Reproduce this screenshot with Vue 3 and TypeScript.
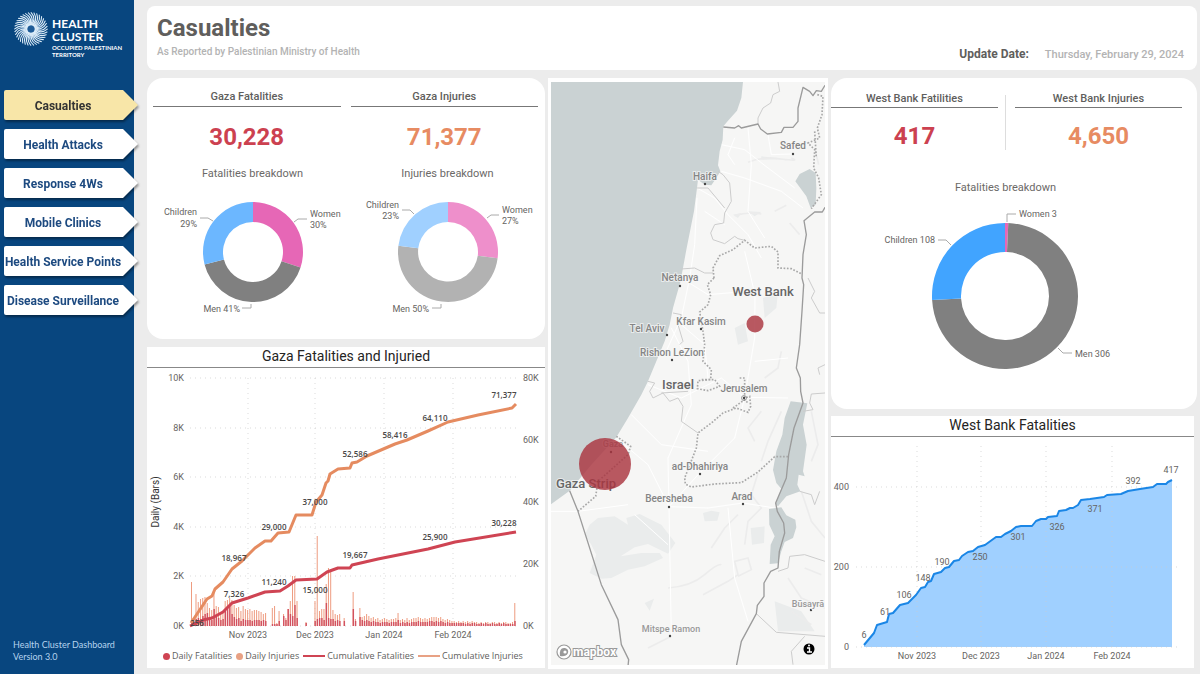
<script setup lang="ts">
interface Slice { value: number; color: string }
interface Label { x: number; y: number; text: string }
interface Place extends Label { dot?: [number, number]; size?: 'minor' | 'region' }

const pages = ['Casualties', 'Health Attacks', 'Response 4Ws', 'Mobile Clinics', 'Health Service Points', 'Disease Surveillance']
const current = 'Casualties'

function ring(cx: number, cy: number, outer: number, inner: number, slices: Slice[]) {
  const total = slices.reduce((sum, s) => sum + s.value, 0)
  const at = (r: number, share: number) => {
    const a = share * 2 * Math.PI
    return `${(cx + r * Math.sin(a)).toFixed(2)} ${(cy - r * Math.cos(a)).toFixed(2)}`
  }
  let from = 0
  return slices.map((s) => {
    const to = from + s.value / total
    const big = to - from > 0.5 ? 1 : 0
    const d = `M${at(outer, from)}A${outer} ${outer} 0 ${big} 1 ${at(outer, to)}L${at(inner, to)}A${inner} ${inner} 0 ${big} 0 ${at(inner, from)}Z`
    from = to
    return { d, color: s.color }
  })
}

const gazaFatalities = ring(98, 66, 50, 30, [
  { value: 30, color: '#e667b6' },
  { value: 41, color: '#808080' },
  { value: 29, color: '#6cb7ff' },
])
const gazaInjuries = ring(98, 66, 50, 30, [
  { value: 27, color: '#ee8fcb' },
  { value: 50, color: '#b2b2b2' },
  { value: 23, color: '#a0d0ff' },
])
const westBank = ring(174, 98, 73, 44, [
  { value: 3, color: '#e667b6' },
  { value: 306, color: '#808080' },
  { value: 108, color: '#41a4ff' },
])

const dailyInjuries = [
  44, 8, 32, 24, 27, 28, 29, 23, 18, 16, 36, 20, 19, 14, 15, 25, 26, 28, 26, 21, 18, 19, 15, 20, 17, 16, 17, 15, 16, 16,
  15, 14, 12, 13, 0, 0, 18, 20, 3, 15, 0, 12, 8, 17, 25, 50, 50, 25, 0, 0, 0, 4, 0, 0, 0, 25, 90, 15, 17, 17,
  42, 58, 54, 16, 12, 11, 12, 0, 8, 0, 0, 0, 34, 7, 0, 18, 9, 10, 12, 10, 8, 9, 7, 8, 6, 7, 8, 7, 6, 7,
  7, 8, 13, 6, 7, 6, 8, 6, 7, 8, 8, 9, 8, 7, 8, 7, 8, 9, 9, 9, 8, 9, 7, 6, 7, 6, 5, 5, 4, 5,
  4, 5, 4, 5, 4, 5, 4, 4, 3, 4, 3, 4, 4, 3, 4, 4, 3, 4, 3, 4, 4, 3, 3, 4, 23,
]
const dailyFatalities = [
  6, 4, 7, 8, 7, 10, 12, 13, 9, 6, 17, 11, 8, 6, 7, 15, 20, 22, 12, 9, 7, 8, 5, 7, 6, 6, 6, 5, 6, 6,
  6, 5, 6, 5, 0, 0, 2, 2, 2, 5, 0, 10, 6, 17, 12, 10, 21, 8, 0, 0, 0, 3, 0, 0, 0, 5, 7, 8, 8, 6,
  23, 8, 7, 7, 5, 6, 5, 0, 5, 0, 0, 0, 17, 5, 0, 9, 6, 5, 6, 5, 4, 5, 4, 4, 3, 4, 4, 4, 3, 4,
  4, 4, 6, 3, 4, 3, 4, 3, 4, 4, 4, 5, 4, 4, 4, 4, 5, 5, 4, 5, 4, 5, 4, 3, 4, 3, 3, 3, 3, 3,
  3, 3, 2, 3, 2, 3, 3, 2, 2, 3, 2, 3, 2, 2, 3, 2, 2, 3, 2, 3, 2, 2, 2, 2, 5,
]
const barX = (i: number) => 191 + i * 2.245

const injuriesLine = '191,623 197,614 207,599 212,596 215,589 223,582 232,569 242,561 255,548 265,541 271,541 278,533 289,532 296,515 312,515 316,502 322,495 326,483 328,481 330,474 338,469 350,468 352,463 357,462 367,456 395,444 407,440 428,431 448,422 478,415 512,408 516,404'
const fatalitiesLine = '190,626 203,620 212,618 223,612 232,603 248,598 265,592 280,591 288,586 296,580 317,579 327,572 338,568 350,568 352,565 378,559 428,549 455,542 516,532'
const westBankLine = '864,645 874,633 877,625 887,622 889,614 893,613 900,605 908,603 916,595 921,588 925,587 928,582 931,581 934,574 941,572 945,568 949,567 954,561 959,560 962,556 968,552 973,551 978,547 985,545 996,537 1001,537 1005,534 1011,531 1016,527 1021,526 1032,526 1036,521 1041,519 1046,519 1048,517 1057,516 1059,511 1066,510 1070,508 1073,508 1078,505 1081,500 1090,499 1104,497 1107,495 1121,494 1128,491 1140,489 1153,487 1157,484 1166,484 1168,482 1172,480'

const gazaMonths: Label[] = [
  { x: 248, y: 638, text: 'Nov 2023' }, { x: 315, y: 638, text: 'Dec 2023' },
  { x: 384, y: 638, text: 'Jan 2024' }, { x: 453, y: 638, text: 'Feb 2024' },
]
const gazaLeft: Label[] = ['10K', '8K', '6K', '4K', '2K', '0K'].map((text, i) => ({ x: 184, y: Math.round(378 + i * 49.6), text }))
const gazaRight: Label[] = ['80K', '60K', '40K', '20K', '0K'].map((text, i) => ({ x: 523, y: 378 + i * 62, text }))
const gazaValues: Label[] = [
  { x: 504, y: 398, text: '71,377' }, { x: 435, y: 421, text: '64,110' }, { x: 395, y: 438, text: '58,416' },
  { x: 355, y: 457, text: '52,586' }, { x: 315, y: 505, text: '37,000' }, { x: 274, y: 530, text: '29,000' },
  { x: 234, y: 561, text: '18,967' }, { x: 234, y: 597, text: '7,326' }, { x: 274, y: 585, text: '11,240' },
  { x: 315, y: 593, text: '15,000' }, { x: 355, y: 558, text: '19,667' }, { x: 435, y: 540, text: '25,900' },
  { x: 504, y: 526, text: '30,228' }, { x: 197, y: 626, text: '256' },
]
const westMonths: Label[] = [
  { x: 917, y: 659, text: 'Nov 2023' }, { x: 981, y: 659, text: 'Dec 2023' },
  { x: 1046, y: 659, text: 'Jan 2024' }, { x: 1112, y: 659, text: 'Feb 2024' },
]
const westLevels: Label[] = [{ x: 849, y: 487, text: '400' }, { x: 849, y: 567, text: '200' }, { x: 849, y: 647, text: '0' }]
const westValues: Label[] = [
  { x: 864, y: 638, text: '6' }, { x: 885, y: 615, text: '61' }, { x: 904, y: 598, text: '106' },
  { x: 923, y: 581, text: '148' }, { x: 942, y: 565, text: '190' }, { x: 980, y: 560, text: '250' },
  { x: 1018, y: 540, text: '301' }, { x: 1057, y: 530, text: '326' }, { x: 1095, y: 512, text: '371' },
  { x: 1133, y: 484, text: '392' }, { x: 1171, y: 473, text: '417' },
]

const places: Place[] = [
  { x: 242, y: 67, text: 'Safed', dot: [242, 72] },
  { x: 154, y: 98, text: 'Haifa', dot: [154, 102] },
  { x: 129, y: 199, text: 'Netanya', dot: [129, 204] },
  { x: 150, y: 243, text: 'Kfar Kasim', dot: [150, 247] },
  { x: 96, y: 250, text: 'Tel Aviv', dot: [116, 253] },
  { x: 121, y: 274, text: 'Rishon LeZion', dot: [121, 278] },
  { x: 193, y: 310, text: 'Jerusalem', dot: [193, 316] },
  { x: 149, y: 388, text: 'ad-Dhahiriya', dot: [149, 392] },
  { x: 118, y: 420, text: 'Beersheba', dot: [118, 425] },
  { x: 191, y: 418, text: 'Arad', dot: [192, 422] },
  { x: 120, y: 550, text: 'Mitspe Ramon', dot: [119, 554], size: 'minor' },
  { x: 257, y: 525, text: 'Būsayrā', dot: [260, 528], size: 'minor' },
  { x: 62, y: 365, text: 'Gaza', dot: [60, 370], size: 'minor' },
  { x: 212, y: 214, text: 'West Bank', size: 'region' },
  { x: 127, y: 307, text: 'Israel', size: 'region' },
  { x: 35, y: 406, text: 'Gaza Strip', size: 'region' },
]

const blades = Array.from({ length: 36 }, (_, i) => i * 10)
</script>

<template>
  <div class="page">
    <aside class="sidebar">
      <div class="brand">
        <svg class="swirl" viewBox="-17 -17 34 34" aria-hidden="true">
          <circle r="10" fill="#4f86ba" fill-opacity="0.6" />
          <path v-for="a in blades" :key="a" :transform="`rotate(${a})`" d="M0-4C5-6 6-11 3-16" />
          <circle r="3.5" fill="#1f5c98" />
        </svg>
        <div class="brand-text">
          <strong>HEALTH<br>CLUSTER</strong>
          <small>OCCUPIED PALESTINIAN<br>TERRITORY</small>
        </div>
      </div>
      <nav class="menu">
        <div v-for="p in pages" :key="p" class="tab">
          <button type="button" :class="{ active: p === current }">{{ p }}</button>
        </div>
      </nav>
      <p class="version">Health Cluster Dashboard<br>Version 3.0</p>
    </aside>

    <main class="main">
      <header class="header">
        <div>
          <h1>Casualties</h1>
          <p>As Reported by Palestinian Ministry of Health</p>
        </div>
        <div class="updated"><b>Update Date:</b><span>Thursday, February 29, 2024</span></div>
      </header>

      <div class="board">
        <div class="column">
          <section class="card rounded gaza">
            <div class="stats">
              <div class="stat"><h2>Gaza Fatalities</h2><strong class="red">30,228</strong></div>
              <div class="stat"><h2>Gaza Injuries</h2><strong class="orange">71,377</strong></div>
            </div>
            <div class="rings">
              <div>
                <h3>Fatalities breakdown</h3>
                <svg viewBox="0 0 195 153" role="img" aria-label="Gaza fatalities breakdown">
                  <path v-for="s in gazaFatalities" :key="s.color" :d="s.d" :fill="s.color" />
                  <path class="leader" d="M45 32H53L58 35M139 36L143 33H152M87 122H96V118" />
                  <text class="label end" x="42" y="29">Children</text><text class="label end" x="42" y="41">29%</text>
                  <text class="label" x="155" y="31">Women</text><text class="label" x="155" y="42">30%</text>
                  <text class="label end" x="85" y="126">Men 41%</text>
                </svg>
              </div>
              <div>
                <h3>Injuries breakdown</h3>
                <svg viewBox="0 0 195 153" role="img" aria-label="Gaza injuries breakdown">
                  <path v-for="s in gazaInjuries" :key="s.color" :d="s.d" :fill="s.color" />
                  <path class="leader" d="M52 24H60L64 28M137 32L141 29H149M82 122H91V118" />
                  <text class="label end" x="49" y="22">Children</text><text class="label end" x="49" y="33">23%</text>
                  <text class="label" x="152" y="27">Women</text><text class="label" x="152" y="38">27%</text>
                  <text class="label end" x="79" y="126">Men 50%</text>
                </svg>
              </div>
            </div>
          </section>

          <section class="card">
            <h2 class="chart-title">Gaza Fatalities and Injuried</h2>
            <svg class="chart" viewBox="147 368 398 280" role="img" aria-label="Gaza fatalities and injuries by day">
              <g class="grid">
                <line v-for="l in gazaLeft" :key="l.y" x1="190" x2="516" :y1="l.y" :y2="l.y" />
                <line v-for="m in gazaMonths" :key="m.x" :x1="m.x" :x2="m.x" y1="378" y2="626" />
              </g>
              <g fill="#ee9c80">
                <rect v-for="(h, i) in dailyInjuries" :key="i" :x="barX(i)" :y="626 - h" width="1" :height="h" />
              </g>
              <g fill="#d25260">
                <rect v-for="(h, i) in dailyFatalities" :key="i" :x="barX(i)" :y="626 - h" width="1.4" :height="h" />
              </g>
              <polyline class="line" stroke="#e58b60" :points="injuriesLine" />
              <polyline class="line" stroke="#cf4453" :points="fatalitiesLine" />
              <text v-for="l in gazaLeft" :key="l.text" class="label end" :x="l.x" :y="l.y + 3">{{ l.text }}</text>
              <text v-for="l in gazaRight" :key="l.text" class="label" :x="l.x" :y="l.y + 3">{{ l.text }}</text>
              <text v-for="l in gazaMonths" :key="l.text" class="label mid" :x="l.x" :y="l.y">{{ l.text }}</text>
              <text v-for="l in gazaValues" :key="l.text" class="value mid" :x="l.x" :y="l.y">{{ l.text }}</text>
              <text class="axis mid" transform="translate(159 502) rotate(-90)">Daily (Bars)</text>
            </svg>
            <ul class="legend">
              <li><i class="dot fatal"></i>Daily Fatalities</li>
              <li><i class="dot injured"></i>Daily Injuries</li>
              <li><i class="dash fatal"></i>Cumulative Fatalities</li>
              <li><i class="dash injured"></i>Cumulative Injuries</li>
            </ul>
          </section>
        </div>

        <section class="card map">
          <svg viewBox="0 0 274 583" preserveAspectRatio="xMidYMid slice" role="img" aria-label="Map of casualties">
            <rect width="274" height="583" fill="#f6f6f5" />
            <g transform="translate(-3 -4) scale(0.33333)">
              <g fill="#eaecec">
                <path d="M150 1320 200 1315 240 1340 235 1320 275 1308 340 1340 382 1395 360 1427 300 1398 260 1408 218 1435 280 1425 335 1425 345 1440 290 1465 240 1475 190 1500 160 1502 125 1485 145 1430 130 1400 110 1370 125 1340Z" />
                <path d="M465 1305 490 1298 515 1303 508 1328 470 1330ZM608 1350 650 1345 648 1395 612 1400ZM680 1570 760 1600 800 1660 690 1660ZM290 1575 318 1562 305 1598Z" />
                <path d="M645 660 690 640 685 690 650 720ZM560 750 590 735 600 790 570 800ZM555 410 580 405 570 420ZM600 400 640 402 620 415ZM640 235 690 240 720 248 690 244 640 245Z" />
              </g>
              <g class="relief">
                <path d="M600 253Q640 235 700 243T730 240M560 413Q600 400 640 408M680 400 715 382M725 435 755 470M800 210 812 260M650 900 690 870 700 820M640 1000 600 1050 620 1090M700 1000 660 1090 640 1150M630 1185 610 1250 640 1290 600 1330 590 1400" />
                <path d="M490 1410 530 1350 570 1310M360 1530Q430 1525 470 1490T520 1460M465 1550 540 1510 570 1490 560 1450 600 1440 610 1475 570 1495M300 1710 370 1675M760 1240 790 1330 831 1380M720 1500 760 1560 831 1590M730 1600 790 1640M790 1000 810 1100 790 1150M770 1470 820 1490" />
              </g>
              <g class="road">
                <path d="M447 330 500 360 540 410 600 470 640 540M447 360 440 500 425 600 400 720 350 830M520 200 590 215 660 270 740 330M600 150 610 260 600 400 650 480M520 280 590 300 700 340 765 390M660 170 670 230 735 228M400 740 470 800 480 900M370 750 420 850 430 980 360 1140 363 1286M590 958 620 780 621 650 590 520M590 958 560 1080 455 1185 363 1286 370 1671" />
                <path d="M300 920 400 960 520 900 590 958 720 960M250 1010 340 1100 480 1120M205 1080 300 1160 363 1286 480 1290 585 1275 680 1290M540 1290 560 1500 600 1630M9 1300 90 1300 240 1280M260 1310 360 1400M400 600 480 650 600 640M560 180 540 230 560 260M470 400 530 440M620 850 720 840" />
              </g>
              <g fill="#cad2d3">
                <path d="M9 12H585L580 60 567 98 540 128 526 145 524 185 515 220 510 262 517 280 505 300 490 322 470 320 450 305 447 330 438 400 428 450 416 510 404 575 397 612 375 690 365 740 350 790 325 850 300 910 280 950 240 1020 205 1078 130 1160 65 1238 9 1279Z" />
                <path d="M785 273 803 285 805 330 803 380 788 390 775 355 742 310 755 288Z" />
                <path d="M728 970 778 976 765 1040 776 1100 765 1180 770 1195 752 1190 748 1220 757 1240 715 1255 690 1285 683 1278 700 1232 685 1215 675 1176 685 1120 703 1070 710 1020Z" />
                <path d="M663 1293 700 1288 715 1312 742 1325 745 1348 735 1380 710 1392 700 1420 690 1456 665 1458 668 1400 680 1375 664 1340Z" />
              </g>
              <g class="district">
                <path d="M690 12 695 40 675 50 668 75 645 90 630 120 630 138M510 280 525 290 545 315 550 370 530 405 527 435 500 440 488 465 495 485 530 497 560 475 570 482 590 487M447 330 480 330 530 390M400 573 440 570 470 585 495 585M375 705 400 710 390 740 405 790 395 800" />
                <path d="M300 910 320 915 305 940 315 960 345 945 365 970 390 960 405 985 400 1030 450 1065M340 945 420 940M780 600 800 640 790 660 815 705 831 705M831 860 810 870 815 890M831 945 790 948 785 975 795 995 765 1000M755 1240 790 1250 800 1280 815 1240M690 1480 720 1470 725 1435 770 1430 831 1450M625 1607 685 1663 831 1675M770 1675 730 1720 735 1760" />
              </g>
              <g class="dotted">
                <path d="M498 600 495 570 515 533 555 515 590 487 620 510 670 505 690 522 690 570 730 572 762 588M498 600 478 620 488 650 480 680 455 702 465 760 470 800 465 850 490 875 488 905 450 908 448 932 480 938 515 925 500 905 460 905" />
                <path d="M575 900 590 900 590 960 605 955 608 985 600 1003 565 990 525 1005 490 1035 450 1065 445 1110 410 1200 412 1218 430 1227 500 1218 580 1214 630 1182 680 1136 720 1136M555 990 590 965 600 975" />
                <path d="M205 1075 248 1105 240 1130 150 1210 143 1255 90 1300M808 50 825 55 822 110 808 150 815 180 780 195 800 215 797 270 812 300 820 350 790 392M800 160 805 240" />
              </g>
              <path class="border" d="M526 147 560 150 572 143 580 150 630 138 638 153 658 168 700 163 708 148 735 148 750 130 750 90 765 28 785 40 795 53 805 38 820 40 831 22M831 388 823 402 800 402 768 428 775 470 765 530 762 600 767 620 762 700 755 800 745 870 757 900 758 940 765 975 738 1050 722 1130 715 1200 683 1275 688 1300 707 1335 710 1365 694 1420 690 1470 668 1480 648 1515 648 1555 628 1582 625 1607 580 1690 565 1765M65 1238 90 1300 160 1520 210 1625 220 1700 242 1745 240 1765" />
            </g>
            <g v-for="p in places" :key="p.text">
              <circle v-if="p.dot" :cx="p.dot[0]" :cy="p.dot[1]" r="1.2" fill="#444" />
              <text class="place mid" :class="p.size" :x="p.x" :y="p.y">{{ p.text }}</text>
            </g>
            <circle cx="193" cy="316" r="2.5" fill="none" stroke="#777" stroke-width="0.7" />
            <g fill="#aa3440" fill-opacity="0.82">
              <circle cx="54" cy="382" r="26" />
              <circle cx="204" cy="242" r="8.5" />
            </g>
            <g class="mapbox">
              <circle cx="13" cy="570" r="7" fill="#fff" stroke="#999" stroke-width="1.2" />
              <path d="M9 574Q8 565 14 566 18 567 17 571 15 575 9 574Z" fill="#999" />
              <circle cx="14" cy="570" r="1.6" fill="#fff" />
              <text x="22" y="574">mapbox</text>
            </g>
            <circle cx="258" cy="567" r="5.5" fill="#000" />
            <path d="M256 566H258.500V570M256 570H261" fill="none" stroke="#fff" stroke-width="1.4" />
            <circle cx="258" cy="563.6" r="1" fill="#fff" />
          </svg>
        </section>

        <div class="column right">
          <section class="card rounded west">
            <div class="stats">
              <div class="stat"><h2>West Bank Fatilities</h2><strong class="red">417</strong></div>
              <div class="rule"></div>
              <div class="stat"><h2>West Bank Injuries</h2><strong class="orange">4,650</strong></div>
            </div>
            <h3>Fatalities breakdown</h3>
            <svg viewBox="0 0 366 211" role="img" aria-label="West Bank fatalities breakdown">
              <path v-for="s in westBank" :key="s.color" :d="s.d" :fill="s.color" />
              <path class="leader" d="M176 24V16H185M107 42H115L120 47M227 150L232 155H241" />
              <text class="label" x="188" y="19">Women 3</text>
              <text class="label end" x="104" y="45">Children 108</text>
              <text class="label" x="244" y="159">Men 306</text>
            </svg>
          </section>

          <section class="card inset">
            <h2 class="chart-title">West Bank Fatalities</h2>
            <svg class="chart" viewBox="831 437 363 231" role="img" aria-label="West Bank cumulative fatalities">
              <polygon fill="#a0d0ff" :points="`864,647 ${westBankLine} 1172,647`" />
              <g class="grid">
                <line v-for="l in westLevels" :key="l.y" x1="856" x2="1179" :y1="l.y" :y2="l.y" />
                <line v-for="m in westMonths" :key="m.x" :x1="m.x" :x2="m.x" y1="446" y2="647" />
              </g>
              <polyline class="line thin" stroke="#1a86e6" :points="westBankLine" />
              <text v-for="l in westLevels" :key="l.text" class="label end" :x="l.x" :y="l.y + 3">{{ l.text }}</text>
              <text v-for="l in westMonths" :key="l.text" class="label mid" :x="l.x" :y="l.y">{{ l.text }}</text>
              <text v-for="l in westValues" :key="l.text" class="label mid" :x="l.x" :y="l.y">{{ l.text }}</text>
            </svg>
          </section>
        </div>
      </div>
    </main>
  </div>
</template>

<style>
body { margin: 0; background: #ececec; }
</style>

<style scoped>
* { box-sizing: border-box; }
.page { display: flex; min-height: 100vh; background: #ececec; color: #605e5c; font-family: Roboto, "Liberation Sans", sans-serif; }
h1, h2, h3, p, ul { margin: 0; padding: 0; }
svg { display: block; width: 100%; }

.sidebar { display: flex; flex-direction: column; flex: none; width: 134px; padding: 12px 0 12px 4px; background: #08467f; }
.brand { display: flex; gap: 4px; height: 78px; padding-left: 10px; color: #fff; font-family: Lato, sans-serif; }
.swirl { flex: none; width: 34px; height: 34px; }
.swirl path { fill: none; stroke: #dcecf8; stroke-width: 1.1; stroke-linecap: round; }
.brand-text { padding-top: 5px; white-space: nowrap; }
.brand-text strong, .brand-text small { display: block; font-weight: 700; }
.brand-text strong { font-size: 12px; line-height: 13px; }
.brand-text small { margin-top: 1px; font-size: 6px; line-height: 7px; }
.menu { display: flex; flex-direction: column; gap: 9px; }
.tab { position: relative; z-index: 1; width: 134px; filter: drop-shadow(1px 2px 1px rgba(0, 0, 0, 0.4)); }
.tab button { display: block; width: 100%; height: 30px; padding: 0 16px 0 0; border: 0; border-radius: 2px; background: #fff; color: #1d4a80; font: 700 12px/32px Roboto, sans-serif; white-space: nowrap; text-align: center; clip-path: polygon(0 0, calc(100% - 15px) 0, 100% 50%, calc(100% - 15px) 100%, 0 100%); }
.tab button.active { background: #f8e6a8; color: #333; }
.version { margin-top: auto; padding-left: 9px; color: #b5d3ee; font: 9px/12px Lato, sans-serif; }

.main { display: flex; flex: 1; flex-direction: column; gap: 8px; min-width: 0; padding: 6px 3px 6px 13px; }
.header { display: flex; justify-content: space-between; height: 64px; padding: 8px 13px 0 10px; border-radius: 8px; background: #fff; }
.header h1 { font-size: 24px; line-height: 28px; font-weight: 700; }
.header p { margin-top: 4px; color: #b3b3b3; font-size: 10px; line-height: 12px; font-weight: 500; }
.updated { display: flex; gap: 16px; align-items: center; height: 28px; margin-top: 26px; color: #b3b3b3; font-size: 11px; font-weight: 500; }
.updated b { color: #605e5c; font-size: 12px; }

.board { display: grid; grid-template-columns: 398fr 280fr 366fr; gap: 3px; }
.column { display: flex; flex-direction: column; gap: 8px; }
.column.right { gap: 7px; }
.card { background: #fff; }
.rounded { border-radius: 16px; }
.inset { margin-right: 3px; }

.stats { display: flex; gap: 10px; }
.stat { flex: 1; text-align: center; }
.stat h2 { padding-bottom: 3px; border-bottom: 1px solid #777; font-size: 11px; line-height: 13px; font-weight: 500; }
.stat strong { display: block; margin-top: 15px; font-size: 24px; line-height: 30px; font-weight: 700; }
.red { color: #cc4150; }
.orange { color: #e78b62; }
h3 { color: #6b6967; font-size: 11px; line-height: 14px; font-weight: 400; text-align: center; }

.gaza .stats { padding: 12px 7px 0 6px; }
.gaza .rings { display: grid; grid-template-columns: 1fr 1fr; padding: 15px 0 0 8px; }
.gaza .rings svg { margin-top: 5px; }
.west .stats { padding: 14px 15px 0 0; gap: 0; }
.west .stat h2 { padding-bottom: 2px; }
.west .stat strong { margin-top: 13px; }
.west .rule { width: 1px; height: 55px; margin: 3px 9px 0 7px; background: #ddd; }
.west h3 { padding-right: 17px; margin-top: 30px; }
.west svg { margin-top: 3px; }

.chart-title { height: 21px; border-bottom: 1px solid #888; color: #252423; font-size: 14px; line-height: 18px; font-weight: 400; text-align: center; }
.label { fill: #666462; font-size: 9px; }
.value { fill: #4a4847; font-family: "Open Sans", sans-serif; font-size: 8px; font-weight: 600; }
.axis { fill: #333; font-size: 10px; }
.mid { text-anchor: middle; }
.end { text-anchor: end; }
.leader { fill: none; stroke: #aaa; stroke-width: 1; }
.grid line { stroke: #ccc; stroke-opacity: 0.7; stroke-width: 1; stroke-dasharray: 1 4; }
.line { fill: none; stroke-width: 3; stroke-linejoin: round; }
.line.thin { stroke-width: 2; }
.legend { display: flex; gap: 4px; height: 20px; padding-left: 16px; color: #605e5c; font: 9px/16px "Open Sans", sans-serif; list-style: none; white-space: nowrap; }
.legend li { display: flex; gap: 2px; align-items: center; height: 16px; }
.dot { width: 7px; height: 7px; border-radius: 50%; }
.dash { width: 22px; height: 2px; }
.fatal { background: #cf4453; }
.injured { background: #e8a184; }

.map { display: flex; padding: 4px 3px; }
.map svg { height: 100%; }
.relief path { fill: none; stroke: #ececec; stroke-width: 5; }
.road path { fill: none; stroke: #fff; stroke-width: 3; }
.district path { fill: none; stroke: #ccc; stroke-width: 3; stroke-linejoin: round; }
.dotted path { fill: none; stroke: #a8a8a8; stroke-width: 5; stroke-dasharray: 5 5; }
.border { fill: none; stroke: #9b9b9b; stroke-width: 4; stroke-linejoin: round; }
.place { fill: #858585; stroke: #f8f8f8; stroke-width: 2; stroke-opacity: 0.7; paint-order: stroke; font-size: 10px; font-weight: 500; }
.place.minor { fill: #999; font-size: 9px; }
.place.region { fill: #666; font-size: 13px; }
.mapbox text { fill: #fff; stroke: #999; stroke-width: 2; paint-order: stroke; font-size: 12px; font-weight: 700; }
</style>
